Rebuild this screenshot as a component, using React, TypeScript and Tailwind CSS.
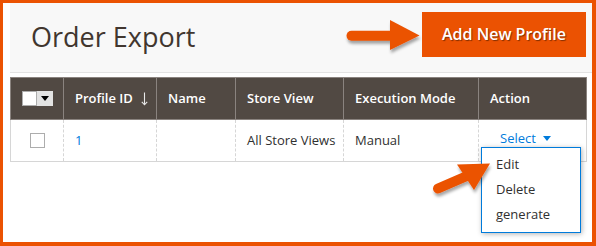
import React from "react";

export default function App() {
  return (
    <div className="relative w-[596px] h-[246px] box-border border-solid border-[#eb5202] border-t-[3px] border-r-[4px] border-b-[4px] border-l-[3px] bg-white overflow-hidden font-['Open_Sans',sans-serif]">
      {/* page header */}
      <div className="ml-[7px] h-[70px] box-border bg-[#f8f8f8] border-b border-[#e3e3e3] flex items-start justify-between pl-[21px] pr-[6px]">
        <h1 className="mt-[15px] text-[27px] leading-[38px] font-normal text-[#41362f]">Order Export</h1>
        <button className="mt-[9px] w-[164px] h-[45px] bg-[#eb5202] text-white text-[16px] font-semibold leading-[45px] text-center [text-shadow:1px_1px_1px_rgba(0,0,0,0.45)]">
          Add New Profile
        </button>
      </div>

      {/* grid */}
      <div className="mt-[4px] ml-[7px] mr-[6px]">
        <table className="w-[576px] table-fixed border-collapse text-[13px]">
          <colgroup>
            <col className="w-[53px]" />
            <col className="w-[93px]" />
            <col className="w-[79px]" />
            <col className="w-[108px]" />
            <col className="w-[135px]" />
            <col className="w-[108px]" />
          </colgroup>
          <thead>
            <tr className="h-[42px] bg-[#514943] text-white">
              <th className="border border-[#8a837f] p-0">
                <div className="flex justify-center">
                  <div className="flex h-[15px]">
                    <span className="w-[15px] h-[15px] bg-white border border-[#adadad]" />
                    <span className="w-[16px] h-[15px] bg-[#e3e3e3] flex items-center justify-center">
                      <svg width="8" height="5" viewBox="0 0 8 5"><path d="M0 0h8L4 5z" fill="#000" /></svg>
                    </span>
                  </div>
                </div>
              </th>
              <th className="border border-[#8a837f] pl-[11px] text-left font-semibold">
                <span className="inline-flex items-center">
                  Profile ID
                  <svg className="ml-[8px]" width="7" height="14" viewBox="0 0 7 14">
                    <path d="M3.5 0.5V12.5M0.8 9.8L3.5 12.8L6.2 9.8" fill="none" stroke="#e8e8e8" strokeWidth="1.1" />
                  </svg>
                </span>
              </th>
              <th className="border border-[#8a837f] pl-[11px] text-left font-semibold">Name</th>
              <th className="border border-[#8a837f] pl-[11px] text-left font-semibold">Store View</th>
              <th className="border border-[#8a837f] pl-[11px] text-left font-semibold">Execution Mode</th>
              <th className="border border-[#8a837f] pl-[11px] text-left font-semibold">Action</th>
            </tr>
          </thead>
          <tbody>
            <tr className="h-[42px] text-[#303030]">
              <td className="border-l border-b border-solid border-[#d6d6d6] p-0">
                <div className="flex justify-center">
                  <span className="w-[15px] h-[15px] bg-white border border-[#adadad]" />
                </div>
              </td>
              <td className="border-l border-b border-dashed [border-bottom-style:solid] border-[#d6d6d6] pl-[11px] text-[#007bdb]">1</td>
              <td className="border-l border-b border-dashed [border-bottom-style:solid] border-[#d6d6d6] pl-[11px]"></td>
              <td className="border-l border-b border-dashed [border-bottom-style:solid] border-[#d6d6d6] pl-[11px]">All Store Views</td>
              <td className="border-l border-b border-dashed [border-bottom-style:solid] border-[#d6d6d6] pl-[11px]">Manual</td>
              <td className="border-l border-r border-b border-dashed [border-bottom-style:solid] [border-right-style:solid] border-[#d6d6d6] pl-[21px]">
                <span className="relative top-[-2px] inline-flex items-center text-[#007bdb]">
                  Select
                  <svg className="ml-[7px]" width="8" height="5" viewBox="0 0 8 5"><path d="M0 0h8L4 5z" fill="#007bdb" /></svg>
                </span>
              </td>
            </tr>
          </tbody>
        </table>
      </div>

      {/* dropdown menu */}
      <div className="absolute left-[478px] top-[144px] w-[100px] h-[86px] box-border bg-white border border-[#007bdb] shadow-[1px_1px_5px_rgba(0,0,0,0.3)] pt-[4px] pl-[14px] text-[13px] leading-[25px] text-[#303030]">
        <div>Edit</div>
        <div>Delete</div>
        <div>generate</div>
      </div>

      {/* annotation arrows */}
      <svg className="absolute left-[-3px] top-[-3px] pointer-events-none" width="596" height="246" viewBox="0 0 596 246">
        <defs>
          <filter id="sh" x="-20%" y="-20%" width="140%" height="160%">
            <feDropShadow dx="1" dy="3" stdDeviation="1.5" floodColor="#000" floodOpacity="0.35" />
          </filter>
        </defs>
        <g filter="url(#sh)" fill="#eb5202">
          <line x1="351.5" y1="35.7" x2="393" y2="35.7" stroke="#eb5202" strokeWidth="10" strokeLinecap="round" />
          <polygon points="390,20 419.5,35.5 390,50" />
        </g>
        <g filter="url(#sh)" fill="#eb5202">
          <line x1="438" y1="188.5" x2="468" y2="175.5" stroke="#eb5202" strokeWidth="10" strokeLinecap="round" />
          <polygon points="457,164.5 490,163.5 474,190" />
        </g>
      </svg>
    </div>
  );
}
